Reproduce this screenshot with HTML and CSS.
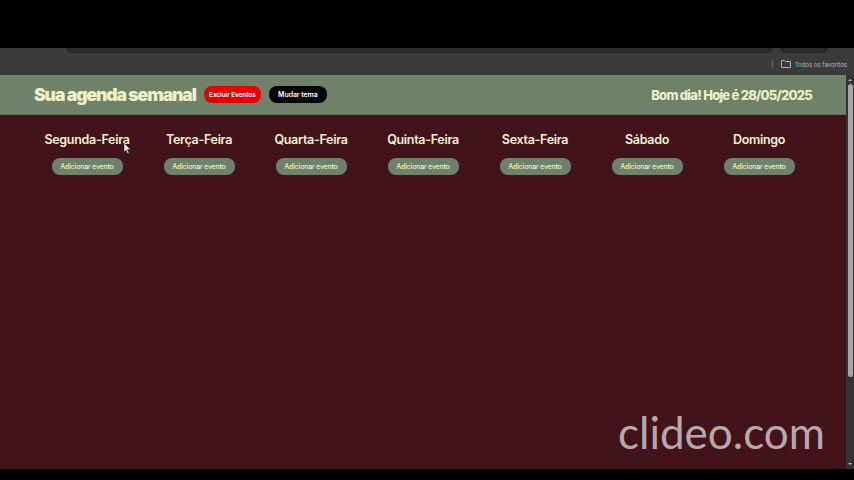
FILE: index.html
```html
<!DOCTYPE html>
<html lang="pt-BR">
<head>
    <meta charset="UTF-8">
    <title>Sua agenda semanal</title>
    <link rel="stylesheet" href="styles.css">
</head>
<body>

    <div class="black-bar"></div>

    <div class="browser-bar">
        <div class="address-row">
            <div class="address-box"></div>
            <div class="profile-box"></div>
        </div>
        <div class="bookmarks">
            <span class="divider"></span>
            <svg class="folder-icon" width="10" height="8" viewBox="0 0 10 8" fill="none" stroke="#b5b5b5" stroke-width="1">
                <path d="M.5 1a.5.500 0 0 1 .5-.5h2.500l1 1h4.500a.5.500 0 0 1 .5.5v5a.5.500 0 0 1-.5.5H1a.5.500 0 0 1-.5-.5z"/>
            </svg>
            <span class="bookmarks-label">Todos os favoritos</span>
        </div>
    </div>

    <div class="page">
        <div class="content">
            <header class="header">
                <div class="header-left">
                    <h1>Sua agenda semanal</h1>
                    <button class="btn-delete">Excluir Eventos</button>
                    <button class="btn-theme">Mudar tema</button>
                </div>
                <p class="greeting">Bom dia! Hoje é 28/05/2025</p>
            </header>

            <main class="week">
                <section class="day">
                    <h2>Segunda-Feira</h2>
                    <button class="btn-add">Adicionar evento</button>
                </section>
                <section class="day">
                    <h2>Terça-Feira</h2>
                    <button class="btn-add">Adicionar evento</button>
                </section>
                <section class="day">
                    <h2>Quarta-Feira</h2>
                    <button class="btn-add">Adicionar evento</button>
                </section>
                <section class="day">
                    <h2>Quinta-Feira</h2>
                    <button class="btn-add">Adicionar evento</button>
                </section>
                <section class="day">
                    <h2>Sexta-Feira</h2>
                    <button class="btn-add">Adicionar evento</button>
                </section>
                <section class="day">
                    <h2>Sábado</h2>
                    <button class="btn-add">Adicionar evento</button>
                </section>
                <section class="day">
                    <h2>Domingo</h2>
                    <button class="btn-add">Adicionar evento</button>
                </section>
            </main>
        </div>

        <div class="scrollbar">
            <span class="arrow-up"></span>
            <span class="thumb"></span>
            <span class="arrow-down"></span>
        </div>
    </div>

    <div class="black-bottom"></div>

    <!-- cursor and watermark sit on top of the recording -->
    <svg class="cursor" width="8" height="11" viewBox="0 0 8 11">
        <path d="M1 0v9l2-2 1.500 3.500 1.500-.6L4.500 6.500H7.500z" fill="#e8e8e8" stroke="#222" stroke-width=".5"/>
    </svg>
    <div class="watermark">clideo.com</div>

</body>
</html>
```

FILE: styles.css
```css
* {
    box-sizing: border-box;
}
html, body {
    height: 100%;
}
body {
    margin: 0;
    width: 854px;
    height: 480px;
    overflow: hidden;
    display: flex;
    flex-direction: column;
    position: relative;
    background-color: #000;
    font-family: Inter, "Open Sans", sans-serif;
}
.black-bar {
    height: 48px;
    background-color: #000;
}
.browser-bar {
    height: 27px;
    background-color: #3b3b3b;
}
.address-row {
    height: 5px;
    display: flex;
    padding-left: 66px;
    gap: 7px;
}
.address-box {
    width: 707px;
    height: 5px;
    background-color: #2a2a2a;
    border-radius: 0 0 8px 8px;
}
.profile-box {
    width: 48px;
    height: 5px;
    background-color: #2a2a2a;
    border-radius: 0 0 8px 8px;
}
.bookmarks {
    display: flex;
    align-items: center;
    justify-content: flex-end;
    height: 22px;
    padding: 0 7px 0 0;
}
.divider {
    width: 1px;
    height: 8px;
    background-color: #666;
    margin-right: 8px;
}
.folder-icon {
    margin-right: 4px;
}
.bookmarks-label {
    font-size: 6px;
    color: #b8b8b8;
}
.page {
    height: 394px;
    display: flex;
}
.content {
    width: 846px;
    background-color: #42131a;
}
.header {
    height: 40px;
    padding: 0 34px;
    display: flex;
    align-items: center;
    justify-content: space-between;
    background-color: #6f8168;
    border-bottom: 1px solid #5d6b56;
}
.header-left {
    display: flex;
    align-items: center;
}
h1 {
    margin: 0 8px 0 0;
    font-size: 17.500px;
    font-weight: 900;
    letter-spacing: -1.050px;
    color: #eef0c8;
}
.greeting {
    margin: 0;
    font-size: 13px;
    font-weight: 800;
    letter-spacing: -0.750px;
    color: #eef0c8;
}
button {
    border: none;
    font-family: inherit;
    font-weight: 600;
}
.btn-delete, .btn-theme {
    height: 17px;
    padding: 0;
    border-radius: 8px;
    font-size: 7px;
    letter-spacing: -0.1px;
    color: #fff;
}
.btn-delete {
    width: 57px;
    font-size: 6.500px;
    background-color: #e60000;
}
.btn-theme {
    width: 58px;
    margin-left: 8px;
    background-color: #000;
}
.week {
    display: grid;
    grid-template-columns: repeat(7, 112px);
    padding: 17px 31px 0;
}
.day {
    display: flex;
    flex-direction: column;
    align-items: center;
}
h2 {
    margin: 0 0 10px 0;
    font-size: 12.500px;
    line-height: 16px;
    font-weight: 600;
    letter-spacing: -0.3px;
    white-space: nowrap;
    color: #f6efd6;
}
.btn-add {
    width: 71px;
    height: 17px;
    padding: 0;
    border-radius: 8px;
    font-size: 7px;
    font-weight: 500;
    letter-spacing: -0.2px;
    color: #eef0c8;
    background-color: #6f8168;
}
.scrollbar {
    width: 8px;
    display: flex;
    flex-direction: column;
    align-items: center;
    background-color: #333;
}
.arrow-up {
    margin: 4px 0 3px;
    border: 2px solid transparent;
    border-top: none;
    border-bottom: 2px solid #bbb;
}
.thumb {
    width: 5px;
    height: 293px;
    border-radius: 3px;
    background-color: #a5a5a5;
}
.arrow-down {
    margin-top: auto;
    margin-bottom: 4px;
    border: 2px solid transparent;
    border-bottom: none;
    border-top: 2px solid #bbb;
}
.black-bottom {
    flex: 1;
    background-color: #000;
}
.cursor {
    position: absolute;
    left: 123px;
    top: 143px;
}
.watermark {
    position: absolute;
    left: 618px;
    top: 404px;
    font-family: Lato, sans-serif;
    font-size: 44px;
    line-height: 56px;
    font-weight: 400;
    color: #b9a8ab;
}
```
